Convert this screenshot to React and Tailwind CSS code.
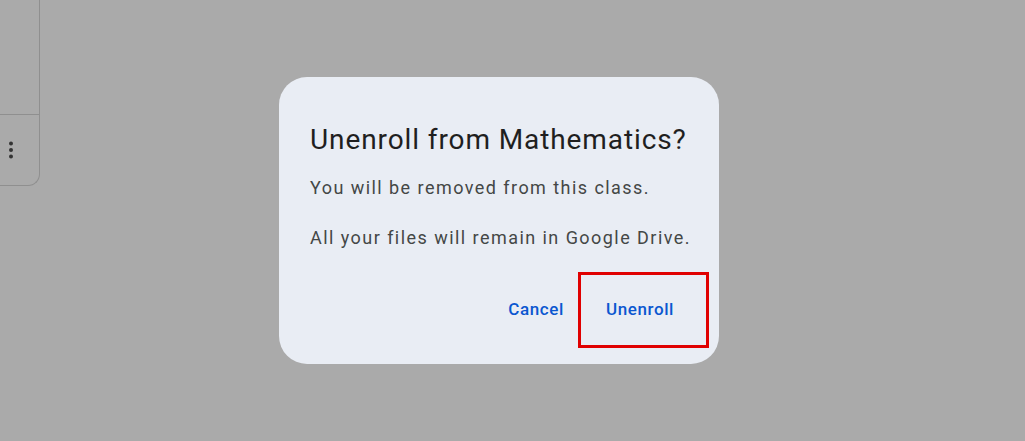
export default function App() {
  return (
    <div className="relative h-[441px] w-[1025px] overflow-hidden bg-[#aaaaaa] font-['Roboto',sans-serif]">
      {/* partial card behind the scrim */}
      <div className="absolute left-[-20px] top-[-10px] flex h-[196px] w-[60px] flex-col rounded-br-[12px] border-b border-r border-[#8f8f8f]">
        <div className="h-[125px] border-b border-[#8f8f8f]" />
        <div className="flex flex-1 items-center justify-end pr-[26px]">
          <svg width="4" height="18" viewBox="0 0 4 18">
            <circle cx="2" cy="2.5" r="2" fill="#333" />
            <circle cx="2" cy="9" r="2" fill="#333" />
            <circle cx="2" cy="15.5" r="2" fill="#333" />
          </svg>
        </div>
      </div>

      <div className="flex h-full items-center pl-[279px]">
        <div className="relative flex h-[287px] w-[440px] flex-col rounded-[28px] bg-[#e9edf4] px-[31px] pt-[45px]">
          <h2 className="whitespace-nowrap text-[28px] leading-[36px] tracking-[0.9px] text-[#1f1f1f]">Unenroll from Mathematics?</h2>
          <p className="mt-[18px] whitespace-nowrap text-[18px] leading-[24px] tracking-[1.45px] text-[#444746]">You will be removed from this class.</p>
          <p className="mt-[26px] whitespace-nowrap text-[18px] leading-[24px] tracking-[1.45px] text-[#444746]">All your files will remain in Google Drive.</p>
          <div className="mt-[47px] flex justify-end gap-[14px]">
            <button className="px-[14px] text-[17px] font-medium leading-[24px] tracking-[0.6px] text-[#0b57d0]">Cancel</button>
            <button className="px-[14px] text-[17px] font-medium leading-[24px] tracking-[0.6px] text-[#0b57d0]">Unenroll</button>
          </div>
          <div className="absolute left-[299px] top-[195px] h-[76px] w-[131px] border-[3px] border-[#e00000]" />
        </div>
      </div>
    </div>
  );
}
